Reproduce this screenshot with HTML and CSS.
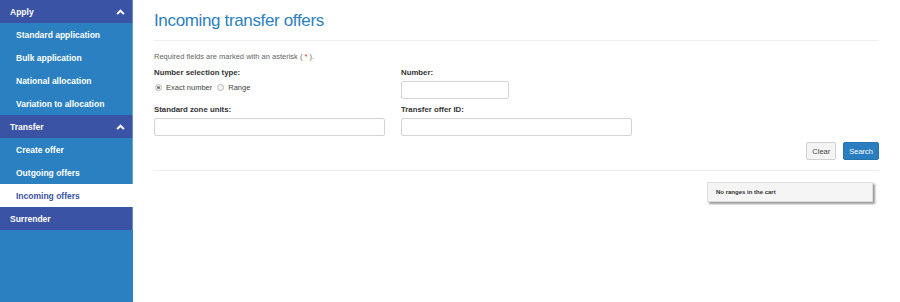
FILE: index.html
```html
<!DOCTYPE html>
<html lang="en">
<head>
<meta charset="utf-8">
<title>Incoming transfer offers</title>
<link rel="stylesheet" href="styles.css">
</head>
<body>
<div class="page">
  <aside class="sidebar">
    <div class="nav-head"><span>Apply</span><svg class="chev" viewBox="0 0 10 7" width="9" height="6"><path d="M1 6 L5 2 L9 6" fill="none" stroke="#fff" stroke-width="2.4"/></svg></div>
    <a class="nav-item">Standard application</a>
    <a class="nav-item">Bulk application</a>
    <a class="nav-item">National allocation</a>
    <a class="nav-item">Variation to allocation</a>
    <div class="nav-head"><span>Transfer</span><svg class="chev" viewBox="0 0 10 7" width="9" height="6"><path d="M1 6 L5 2 L9 6" fill="none" stroke="#fff" stroke-width="2.4"/></svg></div>
    <a class="nav-item">Create offer</a>
    <a class="nav-item">Outgoing offers</a>
    <a class="nav-item active">Incoming offers</a>
    <div class="nav-head"><span>Surrender</span></div>
  </aside>
  <main class="main">
    <h1 class="title">Incoming transfer offers</h1>
    <p class="req">Required fields are marked with an asterisk ( <span class="star">*</span> ).</p>
    <div class="grid">
      <div class="field">
        <label class="lbl">Number selection type:</label>
        <div class="radios">
          <span class="radio checked"></span><span class="rtext">Exact number</span>
          <span class="radio"></span><span class="rtext">Range</span>
        </div>
      </div>
      <div class="field">
        <label class="lbl">Number:</label>
        <div class="input short"></div>
      </div>
      <div class="field">
        <label class="lbl">Standard zone units:</label>
        <div class="input"></div>
      </div>
      <div class="field">
        <label class="lbl">Transfer offer ID:</label>
        <div class="input"></div>
      </div>
    </div>
    <div class="actions">
      <button class="btn btn-default">Clear</button>
      <button class="btn btn-primary">Search</button>
    </div>
    <div class="cart-row">
      <div class="cart">No ranges in the cart</div>
    </div>
  </main>
</div>
</body>
</html>
```

FILE: styles.css
```css
html, body {
  margin: 0;
  padding: 0;
  height: 100%;
  background: #fff;
  font-family: "Liberation Sans", Arial, sans-serif;
}
.page {
  display: flex;
  min-height: 302px;
}
.sidebar {
  width: 133px;
  flex: 0 0 133px;
  background: #2a80c1;
  display: flex;
  flex-direction: column;
}
.nav-head {
  height: 23px;
  box-sizing: border-box;
  background: #3b53a5;
  color: #fff;
  font-weight: bold;
  font-size: 8.5px;
  display: flex;
  align-items: center;
  justify-content: space-between;
  padding: 0 7px 0 10px;
  border-right: 1px solid #6e86c4;
}
.nav-item {
  height: 23px;
  box-sizing: border-box;
  display: flex;
  align-items: center;
  padding-left: 16px;
  color: #fff;
  font-weight: bold;
  font-size: 8.5px;
  border-right: 1px solid #5fa3d6;
}
.nav-item.active {
  background: #fff;
  color: #3b53a5;
  border-right-color: #fff;
}
.chev { display: block; }
.main {
  flex: 1;
  padding: 0 21px 0 21px;
}
.title {
  margin: 0;
  padding-top: 11px;
  padding-bottom: 9px;
  font-size: 17px;
  letter-spacing: -0.35px;
  line-height: 20px;
  font-weight: normal;
  color: #2c7fc0;
  border-bottom: 1px solid #eeeeee;
}
.req {
  margin: 11px 0 0 0;
  font-size: 7.5px;
  line-height: 10px;
  color: #666;
}
.star { color: #d9302c; }
.grid {
  display: grid;
  grid-template-columns: 247px 247px;
  row-gap: 6px;
  margin-top: 6px;
}
.lbl {
  display: block;
  font-size: 7.8px;
  font-weight: bold;
  color: #333;
  line-height: 10px;
  margin-bottom: 3px;
}
.radios {
  display: flex;
  align-items: center;
  height: 12px;
}
.radio {
  width: 5px;
  height: 5px;
  border: 1px solid #bbb;
  border-radius: 50%;
  background: #f3f3f3;
  box-sizing: content-box;
  position: relative;
  margin-left: 1px;
}
.radio.checked::after {
  content: "";
  position: absolute;
  left: 1px; top: 1px;
  width: 3px; height: 3px;
  border-radius: 50%;
  background: #777;
}
.rtext {
  font-size: 7.5px;
  color: #444;
  margin-left: 4px;
  margin-right: 4px;
}
.input {
  width: 231px;
  height: 18px;
  box-sizing: border-box;
  border: 1px solid #d4d4d4;
  border-radius: 2px;
  background: #fff;
}
.input.short { width: 108px; }
.actions {
  display: flex;
  justify-content: flex-end;
  gap: 7px;
  padding-top: 6px;
  padding-bottom: 10px;
  border-bottom: 1px solid #eeeeee;
}
.btn {
  height: 18px;
  font-family: "Liberation Sans", Arial, sans-serif;
  font-size: 7.5px;
  border-radius: 2px;
  padding: 0 5px;
  margin: 0;
}
.btn-default {
  background: #f4f4f4;
  border: 1px solid #d0d0d0;
  color: #444;
}
.btn-primary {
  background: #2a7ec0;
  border: 1px solid #2672ae;
  color: #fff;
}
.cart-row {
  display: flex;
  justify-content: flex-end;
  padding-top: 11px;
  padding-right: 6px;
}
.cart {
  width: 166px;
  height: 20px;
  box-sizing: border-box;
  background: #f5f5f5;
  border: 1px solid #ddd;
  box-shadow: 2px 2px 2px #999;
  font-size: 6px;
  font-weight: bold;
  color: #333;
  display: flex;
  align-items: center;
  padding-left: 8px;
}
```
